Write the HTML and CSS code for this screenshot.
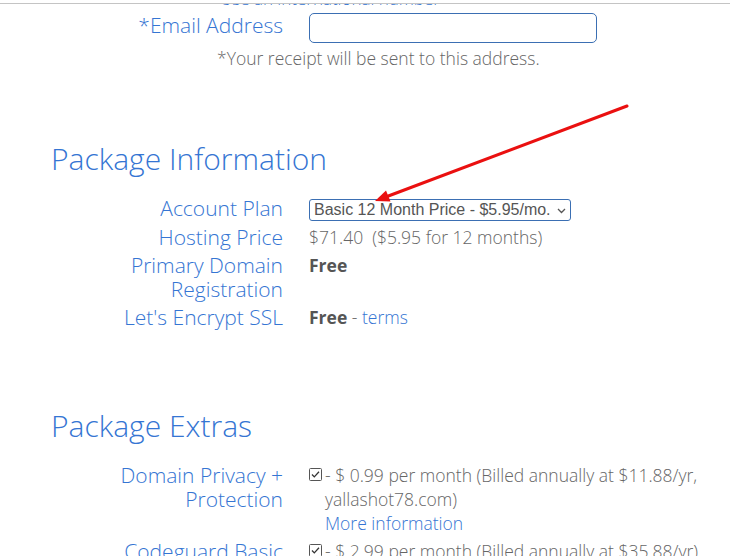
FILE: index.html
```html
<!DOCTYPE html>
<html lang="en">
<head>
<meta charset="UTF-8">
<meta name="viewport" content="width=device-width, initial-scale=1.0">
<title>Checkout - Package Information</title>
<link rel="stylesheet" href="styles.css">
</head>
<body>
<div class="topbar"></div>

<div class="page">
  <div class="account">
    <p class="hint">Use an international number</p>
    <div class="row row-email">
      <label class="label" for="email">*Email Address</label>
      <div class="value"><input id="email" class="text-input" type="email"></div>
    </div>
    <p class="note">*Your receipt will be sent to this address.</p>
  </div>

  <div class="section">
    <h2 class="section-title">Package Information</h2>
    <div class="row row-plan">
      <div class="label">Account Plan</div>
      <div class="value">
        <div class="select">
          <span class="select-text">Basic 12 Month Price - $5.95/mo.</span>
          <svg class="chevron" width="9" height="6" viewBox="0 0 9 6"><path d="M1 1l3.5 3.5L8 1" fill="none" stroke="#555" stroke-width="1.3"/></svg>
        </div>
      </div>
    </div>
    <div class="row">
      <div class="label">Hosting Price</div>
      <div class="value">$71.40&nbsp; ($5.95 for 12 months)</div>
    </div>
    <div class="row">
      <div class="label">Primary Domain Registration</div>
      <div class="value"><b>Free</b></div>
    </div>
    <div class="row">
      <div class="label">Let's Encrypt SSL</div>
      <div class="value"><b>Free</b> - <a class="link" href="#">terms</a></div>
    </div>
  </div>

  <div class="section section-extras">
    <h2 class="section-title">Package Extras</h2>
    <div class="row">
      <div class="label">Domain Privacy + Protection</div>
      <div class="value extra">
        <svg class="check" width="13" height="13" viewBox="0 0 13 13"><rect x="0.5" y="0.5" width="12" height="12" rx="1" fill="#fff" stroke="#555"/><path d="M3 6.5l2.3 2.4L10 3.8" fill="none" stroke="#333" stroke-width="1.3"/></svg>
        <div class="extra-text">- $ 0.99 per month (Billed annually at $11.88/yr, yallashot78.com)<br><a class="link" href="#">More information</a></div>
      </div>
    </div>
    <div class="row">
      <div class="label">Codeguard Basic</div>
      <div class="value extra">
        <svg class="check" width="13" height="13" viewBox="0 0 13 13"><rect x="0.5" y="0.5" width="12" height="12" rx="1" fill="#fff" stroke="#555"/><path d="M3 6.5l2.3 2.4L10 3.8" fill="none" stroke="#333" stroke-width="1.3"/></svg>
        <div class="extra-text">- $ 2.99 per month (Billed annually at $35.88/yr)<br><a class="link" href="#">More information</a></div>
      </div>
    </div>
  </div>
</div>

<!-- annotation arrow drawn over the form -->
<svg class="arrow" width="730" height="556" viewBox="0 0 730 556">
  <line x1="627" y1="106" x2="387" y2="196.5" stroke="#ea1010" stroke-width="3" stroke-linecap="round"/>
  <polygon points="375,201 390.5,201.5 386,190.5" fill="#ea1010"/>
</svg>
</body>
</html>
```

FILE: styles.css
```css
body {
  margin: 0;
  font-family: "Open Sans", "Noto Sans", sans-serif;
  font-weight: 300;
  color: #666;
  background: #fff;
  overflow: hidden;
}
.topbar {
  position: fixed;
  top: 0; left: 0;
  width: 100%;
  height: 3px;
  background: #fff;
  border-bottom: 1px solid #c4c4c4;
  z-index: 5;
}
.page {
  padding-left: 51px;
}
.hint {
  margin: -13px 0 0 169px;
  font-size: 17px;
  line-height: 24px;
  color: #3575d3;
}
.row {
  display: grid;
  grid-template-columns: 180px 403px;
  column-gap: 26px;
  margin-left: 52px;
  margin-bottom: 4px;
  line-height: 24px;
}
.label {
  font-size: 21px;
  color: #3575d3;
  text-align: right;
}
.value {
  font-size: 17.5px;
  color: #666;
}
.value b {
  font-weight: 700;
  color: #555;
}
.row-email {
  margin-top: 2px;
  margin-bottom: 3px;
}
.text-input {
  display: block;
  box-sizing: border-box;
  width: 288px;
  height: 30px;
  margin: 0;
  border: 1px solid #3b6fb3;
  border-radius: 5px;
  background: #fff;
}
.note {
  margin: 0 0 0 166px;
  font-size: 17.5px;
  line-height: 24px;
}
.section {
  margin-top: 69px;
}
.section-extras {
  margin-top: 77px;
}
.section-title {
  margin: 0 0 17px;
  font-size: 30px;
  font-weight: 300;
  line-height: 40px;
  color: #3575d3;
}
.row-plan .value {
  padding-top: 3px;
}
.select {
  position: relative;
  box-sizing: border-box;
  width: 262px;
  height: 22px;
  padding: 0 16px 0 4px;
  border: 1px solid #3b6fb3;
  border-radius: 3px;
  overflow: hidden;
  font-family: "Liberation Sans", Arial, sans-serif;
  font-weight: 400;
  font-size: 16px;
  line-height: 20px;
  color: #555;
  white-space: nowrap;
}
.chevron {
  position: absolute;
  right: 4px;
  top: 8px;
}
.link {
  color: #3575d3;
  text-decoration: none;
}
.extra {
  display: flex;
  align-items: flex-start;
  gap: 3px;
}
.check {
  flex: none;
  margin-top: 5px;
}
.extra-text {
  flex: 1;
}
.arrow {
  position: absolute;
  top: 0; left: 0;
  pointer-events: none;
}
```
